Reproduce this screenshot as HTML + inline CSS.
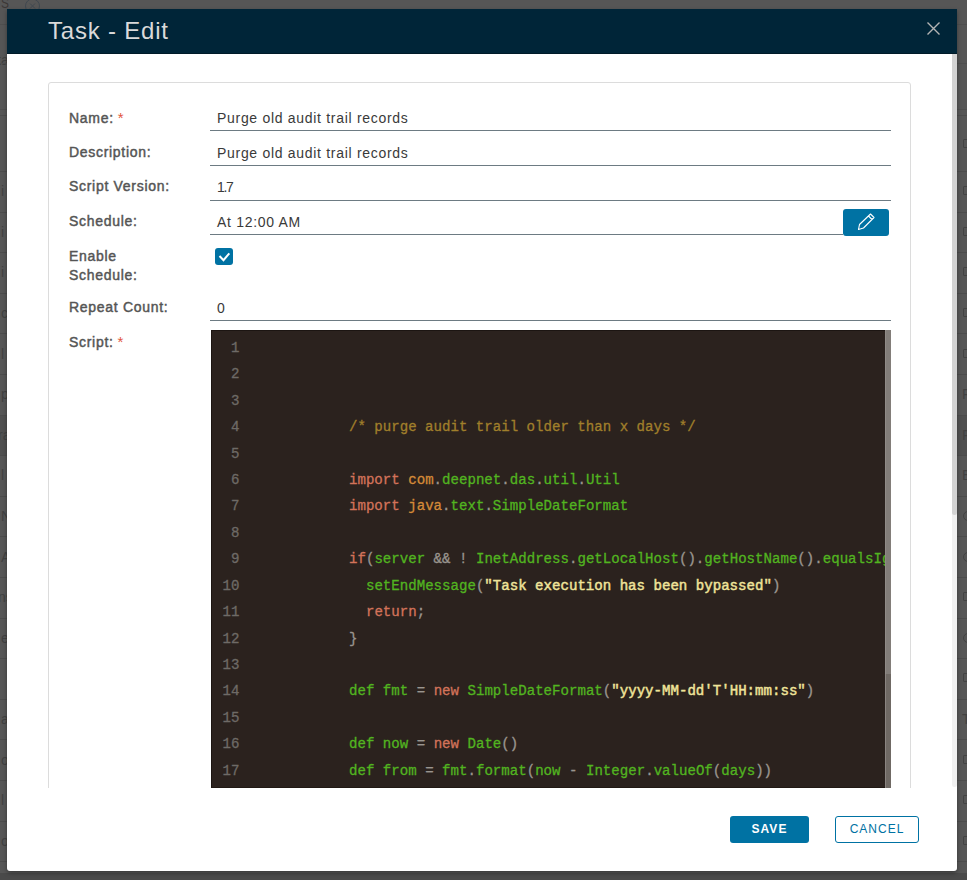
<!DOCTYPE html>
<html><head><meta charset="utf-8">
<style>
*{margin:0;padding:0;box-sizing:border-box}
html,body{width:967px;height:880px;overflow:hidden;background:#555555;font-family:"Liberation Sans",sans-serif}
.bg{position:absolute;left:0;top:0;width:967px;height:880px;background:#565656}
.rows{position:absolute;left:0;top:171px;width:967px;height:702px;background:repeating-linear-gradient(to bottom,#4c4c4c 0,#4c4c4c 1px,transparent 1px,transparent 40.6px)}
.bot{position:absolute;left:0;top:873px;width:967px;height:7px;background:#4a4a4a}
.bgt{position:absolute;font-size:14px;line-height:18px;color:#414141;white-space:nowrap}
.bgb{position:absolute;left:963px;width:9px;height:9px;border:1.5px solid #434343;border-radius:1px}
.bgS{position:absolute;left:1px;top:-5px;font-size:14px;color:#3c3836;transform:scaleX(0.85);transform-origin:0 0}
.modal{position:absolute;left:7px;top:9px;width:950px;height:862px;background:#fff;border-radius:0 0 3px 3px;box-shadow:0 2px 4px rgba(0,0,0,.35)}
.hdr{position:absolute;left:0;top:0;width:950px;height:45px;background:#002538;border-bottom:1px solid #001a28}
.title{position:absolute;left:41px;top:8px;font-size:24px;color:#dadada;letter-spacing:0.8px;white-space:nowrap}
.close{position:absolute;left:919.5px;top:12.5px;width:13px;height:13px}
.body{position:absolute;left:0;top:45px;width:950px;height:734px;overflow:hidden}
.sb-track{position:absolute;left:945px;top:0;width:5px;height:733px;background:#f0f0f0;border-radius:0 0 3px 3px}
.sb-thumb{position:absolute;left:945px;top:0;width:5px;height:461px;background:#d3d3d3;border-radius:0 0 3px 3px}
.card{position:absolute;left:41px;top:28px;width:863px;height:900px;border:1px solid #dcdcdc;border-radius:3px}
.lbl{position:absolute;left:62px;font-size:14px;font-weight:normal;color:#555;white-space:nowrap;line-height:19px;letter-spacing:0.7px;-webkit-text-stroke:0.45px #555}
.req{color:#e2553d;font-weight:normal;-webkit-text-stroke:0;margin-left:4px;font-size:15px;position:relative;top:0px}
.inp{position:absolute;left:203px;width:681px;height:1px;background:#6d7b83}
.val{position:absolute;left:210px;font-size:14px;color:#3a3a3a;white-space:nowrap;line-height:19px;letter-spacing:0.7px}
.editbtn{position:absolute;left:836px;top:155px;width:46px;height:27px;background:#0072a3;border-radius:3px}
.chk{position:absolute;left:208px;top:194px;width:18px;height:17px;background:#0072a3;border-radius:3px}
.editor{position:absolute;left:204px;top:276px;width:680px;height:500px;background:#2b221e;overflow:hidden}
.ebt{position:absolute;left:0;top:0;width:674px;height:1px;background:#1c1512}
.ebl{position:absolute;left:0;top:0;width:1px;height:500px;background:#1c1512}
.ebb{position:absolute;left:0;top:457px;width:674px;height:1px;background:#211914}
.esb{position:absolute;right:0;top:0;width:6px;height:500px;background:#6f6964;border-left:1px solid #8a8480}
.esbt{position:absolute;right:0;top:0;width:6px;height:344px;background:#827d79;border-left:1px solid #8f8a86}
.code{position:absolute;left:1px;top:-1px;font-family:"Liberation Mono",monospace;font-size:14.1px;line-height:26.44px;white-space:pre;-webkit-text-stroke:0.3px}
.ln{position:absolute;left:-2.5px;width:30px;text-align:right;color:#6e6a66}
.tx{position:absolute;left:137px;color:#a09a90}
.cm{color:#a07f2b}.kw{color:#d3735a}.pk{color:#d48a38}.id{color:#52b420}.st{color:#f0e49a;-webkit-text-stroke:0.45px}.pu{color:#9a958f}
.foot{position:absolute;left:0;top:778px;width:950px;height:84px}
.btn{position:absolute;top:29px;height:27px;border-radius:3px;font-size:12px;letter-spacing:1px;text-align:center;line-height:27px;font-weight:bold}
.save{left:723px;width:79px;background:#0072a3;color:#fff}
.cancel{left:828px;width:84px;border:1px solid #0072a3;color:#0072a3;background:#fff;font-weight:normal;line-height:25px}
</style></head><body>
<div class="bg"></div><div style="position:absolute;left:0;top:415px;width:967px;height:41px;background:#505050"></div><div class="rows"></div><div class="bot"></div>
<div class="bgS">S</div>
<div class="bgt" style="left:1px;top:182.1px">i</div>
<div class="bgb" style="top:186.1px"></div>
<div class="bgt" style="left:1px;top:222.7px">i</div>
<div class="bgb" style="top:226.7px"></div>
<div class="bgt" style="left:1px;top:263.3px">i</div>
<div class="bgb" style="top:267.3px"></div>
<div class="bgt" style="left:1px;top:303.9px">c</div>
<div class="bgb" style="top:307.9px"></div>
<div class="bgt" style="left:1px;top:344.5px">l</div>
<div class="bgb" style="top:348.5px"></div>
<div class="bgt" style="left:1px;top:385.1px">p</div>
<div class="bgt" style="left:962px;top:385.1px">F</div>
<div class="bgt" style="left:-2px;top:425.7px">ra</div>
<div class="bgt" style="left:962px;top:425.7px">F</div>
<div class="bgt" style="left:1px;top:466.3px">l</div>
<div class="bgt" style="left:962px;top:466.3px">E</div>
<div class="bgt" style="left:1px;top:506.9px">N</div>
<div class="bgb" style="top:510.9px;border-radius:50%;width:10px;height:10px"></div>
<div class="bgt" style="left:1px;top:547.5px">A</div>
<div class="bgb" style="top:551.5px;border-radius:50%;width:10px;height:10px"></div>
<div class="bgt" style="left:-2px;top:588.1px">ns</div>
<div class="bgb" style="top:592.1px"></div>
<div class="bgt" style="left:1px;top:628.7px">e</div>
<div class="bgb" style="top:632.7px;border-radius:50%;width:10px;height:10px"></div>
<div class="bgb" style="top:673.3px"></div>
<div class="bgt" style="left:1px;top:709.9px">a</div>
<div class="bgt" style="left:962px;top:709.9px">T</div>
<div class="bgt" style="left:1px;top:750.5px">o</div>
<div class="bgb" style="top:754.5px"></div>
<div class="bgt" style="left:1px;top:791.1px">l</div>
<div class="bgb" style="top:795.1px"></div>
<div class="bgt" style="left:1px;top:831.7px">o</div>
<div class="bgb" style="top:835.7px"></div>
<div class="bgb" style="top:138.5px"></div>
<div class="bgt" style="left:-3px;top:51px">ta</div>
<svg style="position:absolute;left:24px;top:-2px" width="18" height="16" viewBox="0 0 18 16"><circle cx="8.5" cy="8" r="7" fill="none" stroke="#404850" stroke-width="1"/><path d="M6 5.5 L11 10.5 M11 5.5 L6 10.5" stroke="#404850" stroke-width="1"/></svg>
<div style="position:absolute;left:0;top:24px;width:967px;height:1px;background:#4f4f4f"></div>
<div style="position:absolute;left:0;top:63px;width:967px;height:1px;background:#4f4f4f"></div>
<div style="position:absolute;left:0;top:109px;width:967px;height:1px;background:#4f4f4f"></div><div style="position:absolute;left:0;top:115px;width:967px;height:1px;background:#4d4d4d"></div>
<div class="modal">
  <div class="hdr">
    <div class="title">Task - Edit</div>
    <svg class="close" viewBox="0 0 13 13"><path d="M0.5 0.5 L12.5 12.5 M12.5 0.5 L0.5 12.5" stroke="#b4b4b4" stroke-width="1.4"/></svg>
  </div>
  <div class="body">
    <div class="card">
    </div>
    <div class="lbl" style="top:54px">Name:<span class="req">*</span></div>
    <div class="val" style="top:55px">Purge old audit trail records</div>
    <div class="inp" style="top:76px"></div>

    <div class="lbl" style="top:89px">Description:</div>
    <div class="val" style="top:90px">Purge old audit trail records</div>
    <div class="inp" style="top:111px"></div>

    <div class="lbl" style="top:123px">Script Version:</div>
    <div class="val" style="top:124px;letter-spacing:-1.3px">1.7</div>
    <div class="inp" style="top:146px"></div>

    <div class="lbl" style="top:158px">Schedule:</div>
    <div class="val" style="top:159px">At 12:00 AM</div>
    <div class="inp" style="top:180px;width:633px"></div>
    <div class="editbtn"><svg width="46" height="27" viewBox="0 0 46 27"><path d="M15.5 20.5 L16.5 15.5 L27.5 5 L31 8.5 L20.5 19 Z M25.5 7 L29 10.5" fill="none" stroke="#fff" stroke-width="1.1" stroke-linejoin="round"/></svg></div>

    <div class="lbl" style="top:193px">Enable<br>Schedule:</div>
    <div class="chk"><svg width="18" height="18" viewBox="0 0 18 18"><path d="M4.5 8 L8.5 12.2 L14.3 5.3" fill="none" stroke="#fff" stroke-width="2"/></svg></div>

    <div class="lbl" style="top:244px">Repeat Count:</div>
    <div class="val" style="top:245px">0</div>
    <div class="inp" style="top:266px"></div>

    <div class="lbl" style="top:278px">Script:<span class="req">*</span></div>

    <div class="editor">
      <div class="code">
<div class="ln" style="top:5.90px">1</div>
<div class="ln" style="top:32.33px">2</div>
<div class="ln" style="top:58.76px">3</div>
<div class="ln" style="top:85.19px">4</div>
<div class="ln" style="top:111.62px">5</div>
<div class="ln" style="top:138.05px">6</div>
<div class="ln" style="top:164.48px">7</div>
<div class="ln" style="top:190.91px">8</div>
<div class="ln" style="top:217.34px">9</div>
<div class="ln" style="top:243.77px">10</div>
<div class="ln" style="top:270.20px">11</div>
<div class="ln" style="top:296.63px">12</div>
<div class="ln" style="top:323.06px">13</div>
<div class="ln" style="top:349.49px">14</div>
<div class="ln" style="top:375.92px">15</div>
<div class="ln" style="top:402.35px">16</div>
<div class="ln" style="top:428.78px">17</div>
<div class="tx" style="top:85.19px"><span class="cm">/* purge audit trail older than x days */</span></div>
<div class="tx" style="top:138.05px"><span class="kw">import</span> <span class="pk">com</span><span class="pu">.</span><span class="id">deepnet</span><span class="pu">.</span><span class="id">das</span><span class="pu">.</span><span class="id">util</span><span class="pu">.</span><span class="id">Util</span></div>
<div class="tx" style="top:164.48px"><span class="kw">import</span> <span class="pk">java</span><span class="pu">.</span><span class="id">text</span><span class="pu">.</span><span class="id">SimpleDateFormat</span></div>
<div class="tx" style="top:217.34px"><span class="kw">if</span><span class="pu">(</span><span class="id">server</span> <span class="pu">&amp;&amp; !</span> <span class="id">InetAddress</span><span class="pu">.</span><span class="id">getLocalHost</span><span class="pu">().</span><span class="id">getHostName</span><span class="pu">().</span><span class="id">equalsIgnoreCase</span></div>
<div class="tx" style="top:243.77px">  <span class="id">setEndMessage</span><span class="pu">(</span><span class="st">"Task execution has been bypassed"</span><span class="pu">)</span></div>
<div class="tx" style="top:270.20px">  <span class="kw">return</span><span class="pu">;</span></div>
<div class="tx" style="top:296.63px"><span class="pu">}</span></div>
<div class="tx" style="top:349.49px"><span class="id">def</span> <span class="id">fmt</span> <span class="pu">=</span> <span class="kw">new</span> <span class="id">SimpleDateFormat</span><span class="pu">(</span><span class="st">"yyyy-MM-dd'T'HH:mm:ss"</span><span class="pu">)</span></div>
<div class="tx" style="top:402.35px"><span class="id">def</span> <span class="id">now</span> <span class="pu">=</span> <span class="kw">new</span> <span class="id">Date</span><span class="pu">()</span></div>
<div class="tx" style="top:428.78px"><span class="id">def</span> <span class="id">from</span> <span class="pu">=</span> <span class="id">fmt</span><span class="pu">.</span><span class="id">format</span><span class="pu">(</span><span class="id">now</span> <span class="pu">-</span> <span class="id">Integer</span><span class="pu">.</span><span class="id">valueOf</span><span class="pu">(</span><span class="id">days</span><span class="pu">))</span></div>
      </div>
      <div class="ebt"></div><div class="ebl"></div><div class="ebb"></div><div class="esb"></div><div class="esbt"></div>
    </div>

    <div class="sb-track"></div>
    <div class="sb-thumb"></div>
  </div>
  <div class="foot">
    <div class="btn save">SAVE</div>
    <div class="btn cancel">CANCEL</div>
  </div>
</div>
</body></html>
